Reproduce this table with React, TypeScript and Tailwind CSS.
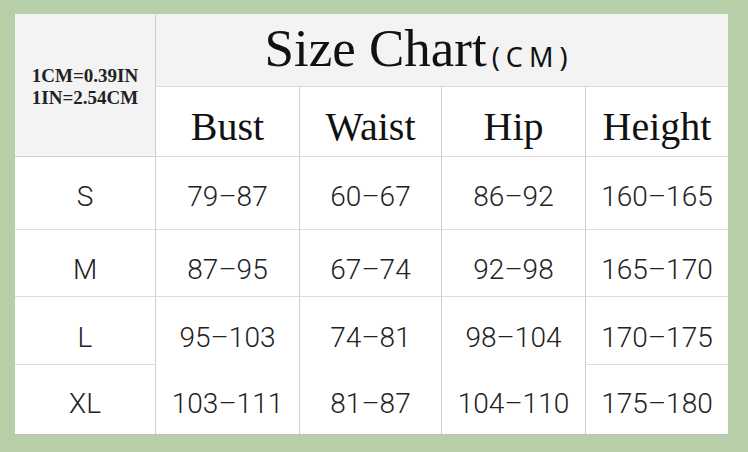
const sizes = [
  { size: "S", bust: "79–87", waist: "60–67", hip: "86–92", height: "160–165", pad: "pt-[8px]" },
  { size: "M", bust: "87–95", waist: "67–74", hip: "92–98", height: "165–170", pad: "pt-[14px]" },
  { size: "L", bust: "95–103", waist: "74–81", hip: "98–104", height: "170–175", pad: "pt-[14px]" },
  { size: "XL", bust: "103–111", waist: "81–87", hip: "104–110", height: "175–180", pad: "pt-[8px]" },
]

const serif = "font-['Liberation_Serif','Times_New_Roman',serif]"
const sans = "font-['Roboto','Liberation_Sans',sans-serif] font-light text-[28px] text-[#222]"

const App = () => {
  return (
    <div className="w-[748px] h-[452px] bg-[#b6cfa9] pl-[15px] pt-[14px]">
      <div className="w-[713px] h-[421px] bg-white border-b border-[#bdbdbd] grid grid-cols-[141px_144px_142px_144px_142px] grid-rows-[73px_70px_73px_67px_68px_69px]">
        <div
          className={`row-span-2 bg-[#f3f3f3] border-r border-b border-[#cfcfcf] flex flex-col items-center justify-center pt-[4px] text-[19px] font-bold leading-[22px] text-[#222] ${serif}`}
        >
          <span>1CM=0.39IN</span>
          <span>1IN=2.54CM</span>
        </div>
        <div className="col-span-4 bg-[#f3f3f3] border-b border-[#dcdcdc] flex items-end justify-center pb-[11px] pr-[46px]">
          <span className={`text-[53px] leading-none text-[#111] ${serif}`}>Size Chart</span>
          <span className="ml-[5px] mb-[5px] text-[27px] leading-none tracking-[6px] text-[#111] font-['Noto_Sans',sans-serif]">
            (CM)
          </span>
        </div>
        {["Bust", "Waist", "Hip", "Height"].map((h, i) => (
          <div
            key={h}
            className={`flex items-center justify-center pt-[10px] border-b border-[#dcdcdc] text-[40px] text-[#111] ${serif} ${i < 3 ? "border-r border-r-[#cfcfcf]" : ""}`}
          >
            {h}
          </div>
        ))}
        {sizes.map((row, r) => {
          const last = r === sizes.length - 1
          const mergedBottom = r === 2
          return [
            <div
              key={row.size}
              className={`flex items-center justify-center ${row.pad} border-r border-[#cfcfcf] ${sans} ${last ? "" : "border-b border-b-[#dcdcdc]"}`}
            >
              {row.size}
            </div>,
            ...[row.bust, row.waist, row.hip].map((v, i) => (
              <div
                key={row.size + i}
                className={`flex items-center justify-center ${row.pad} border-r border-[#cfcfcf] ${sans} ${last || mergedBottom ? "" : "border-b border-b-[#dcdcdc]"}`}
              >
                {v}
              </div>
            )),
            <div
              key={row.size + "h"}
              className={`flex items-center justify-center ${row.pad} ${sans} ${last ? "" : "border-b border-[#dcdcdc]"}`}
            >
              {row.height}
            </div>,
          ]
        })}
      </div>
    </div>
  )
}

export default App
